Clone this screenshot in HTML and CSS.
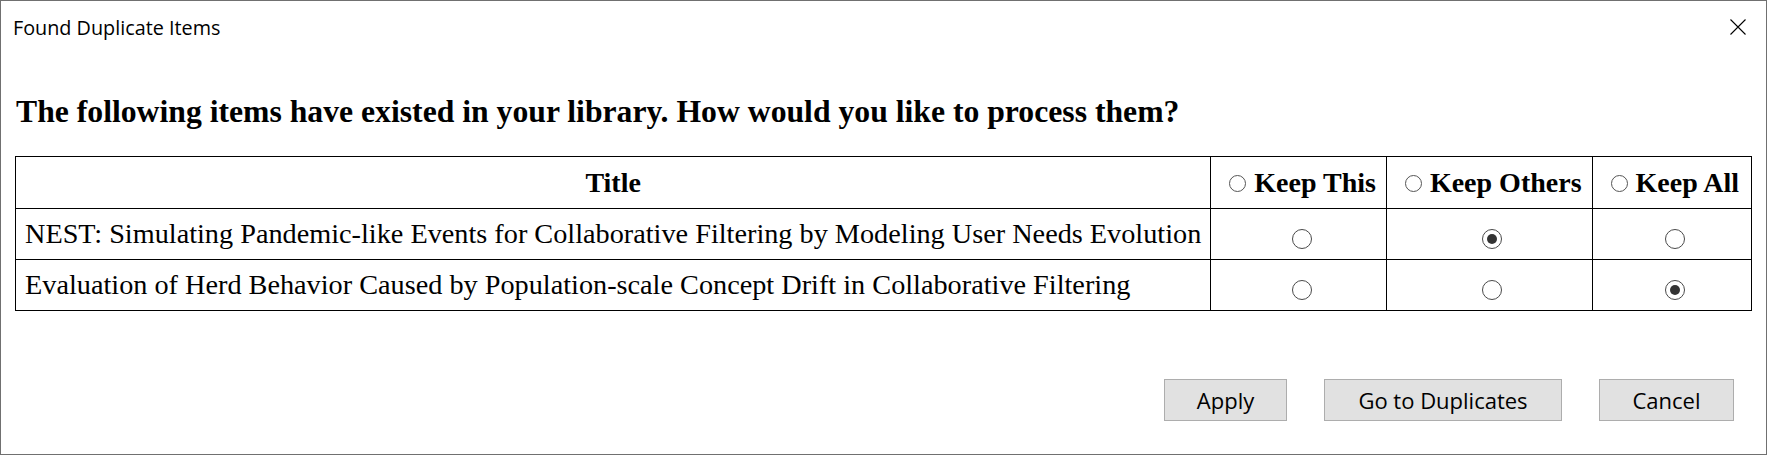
FILE: index.html
```html
<!DOCTYPE html>
<html>
<head>
<meta charset="utf-8">
<title>Found Duplicate Items</title>
<link rel="stylesheet" href="styles.css">
</head>
<body>
<div class="window">
  <div class="titlebar">
    <span class="title">Found Duplicate Items</span>
    <svg class="close" width="16" height="16" viewBox="0 0 16 16"><path d="M0.5 0.5 L15.5 15.5 M15.5 0.5 L0.5 15.5" stroke="#000" stroke-width="1.1" fill="none"/></svg>
  </div>
  <div class="content">
    <h1 class="heading">The following items have existed in your library. How would you like to process them?</h1>
    <table class="dups">
      <colgroup>
        <col class="c-title">
        <col class="c-this">
        <col class="c-others">
        <col class="c-all">
      </colgroup>
      <thead>
        <tr>
          <th class="th-title">Title</th>
          <th class="th-opt"><span class="hcircle"></span>Keep This</th>
          <th class="th-opt"><span class="hcircle"></span>Keep Others</th>
          <th class="th-opt"><span class="hcircle"></span>Keep All</th>
        </tr>
      </thead>
      <tbody>
        <tr>
          <td class="td-title">NEST: Simulating Pandemic-like Events for Collaborative Filtering by Modeling User Needs Evolution</td>
          <td class="td-opt"><span class="radio"></span></td>
          <td class="td-opt"><span class="radio checked"></span></td>
          <td class="td-opt"><span class="radio"></span></td>
        </tr>
        <tr>
          <td class="td-title">Evaluation of Herd Behavior Caused by Population-scale Concept Drift in Collaborative Filtering</td>
          <td class="td-opt"><span class="radio"></span></td>
          <td class="td-opt"><span class="radio"></span></td>
          <td class="td-opt"><span class="radio checked"></span></td>
        </tr>
      </tbody>
    </table>
  </div>
  <div class="buttons">
    <button class="btn btn-apply">Apply</button>
    <button class="btn btn-goto">Go to Duplicates</button>
    <button class="btn btn-cancel">Cancel</button>
  </div>
</div>
</body>
</html>
```
FILE: styles.css
```css
html, body {
  margin: 0;
  padding: 0;
  background: #fff;
}

.window {
  width: 1767px;
  height: 455px;
  box-sizing: border-box;
  border: 1px solid #707070;
  display: flex;
  flex-direction: column;
  background: #fff;
}

.titlebar {
  height: 52px;
  flex: none;
  display: flex;
  align-items: center;
  justify-content: space-between;
  padding: 0 20px 0 12px;
}

.title {
  font-family: "Open Sans", "Noto Sans", sans-serif;
  font-size: 19.8px;
  color: #000;
}

.close {
  display: block;
}

.content {
  padding: 0 14px;
  flex: none;
}

.heading {
  font-family: "Liberation Serif", "Times New Roman", serif;
  font-weight: bold;
  font-size: 31.7px;
  line-height: 36px;
  margin: 41px 0 26px 1px;
  color: #000;
}

.dups {
  width: 100%;
  border-collapse: collapse;
  border: 1px solid #000;
  font-family: "Liberation Serif", "Times New Roman", serif;
  font-size: 28.25px;
  line-height: 32px;
  color: #000;
}

.c-this { width: 176px; }
.c-others { width: 206px; }
.c-all { width: 160px; }

.dups th,
.dups td {
  border: 1px solid #000;
  padding: 9px 9px;
  vertical-align: middle;
  white-space: nowrap;
}

.dups th {
  font-weight: bold;
  font-size: 28px;
  padding-top: 10px;
}

.th-title {
  text-align: center;
}

.th-opt {
  text-align: left;
  padding-left: 18px !important;
  padding-right: 4px !important;
}

.hcircle {
  display: inline-block;
  width: 17px;
  height: 17px;
  box-sizing: border-box;
  border: 1px solid #555;
  border-radius: 50%;
  margin-right: 8px;
  vertical-align: 0;
}

.td-title {
  text-align: left;
}

.td-opt {
  text-align: center;
}

.radio {
  display: inline-block;
  width: 20px;
  height: 20px;
  box-sizing: border-box;
  border: 1px solid #4a4a4a;
  border-radius: 50%;
  vertical-align: middle;
  margin-left: 6px;
  margin-top: 4px;
  position: relative;
  background: #fff;
}

.radio.checked::after {
  content: "";
  position: absolute;
  left: 4px;
  top: 4px;
  width: 10px;
  height: 10px;
  border-radius: 50%;
  background: #333;
}

.buttons {
  margin-top: auto;
  margin-bottom: 33px;
  display: flex;
  justify-content: flex-end;
  gap: 37px;
  padding-right: 32px;
}

.btn {
  height: 42px;
  box-sizing: border-box;
  background: #e1e1e1;
  border: 1px solid #adadad;
  border-radius: 0;
  font-family: "Open Sans", "Noto Sans", sans-serif;
  font-size: 22px;
  color: #000;
  padding: 0;
  margin: 0;
}

.btn-apply { width: 123px; }
.btn-goto { width: 238px; }
.btn-cancel { width: 135px; }
```
